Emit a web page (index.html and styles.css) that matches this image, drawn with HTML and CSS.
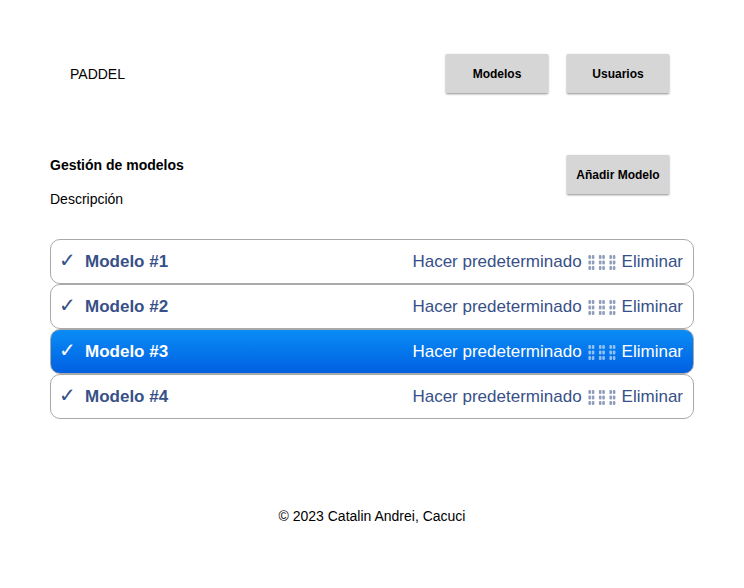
FILE: index.html
```html
<!DOCTYPE html>
<html lang="es">
<head>
<meta charset="utf-8">
<title>PADDEL</title>
<link rel="stylesheet" href="styles.css">
</head>
<body>
<header class="topbar">
  <div class="brand">PADDEL</div>
  <nav class="nav">
    <button class="btn">Modelos</button>
    <button class="btn">Usuarios</button>
  </nav>
</header>
<main class="content">
  <section class="intro">
    <div class="intro-text">
      <h2 class="title">Gestión de modelos</h2>
      <p class="desc">Descripción</p>
    </div>
    <button class="btn">Añadir Modelo</button>
  </section>
  <ul class="list">
    <li class="item"><span class="name"><span class="check">✓</span>Modelo #1</span><span class="actions">Hacer predeterminado<svg class="tofu" viewBox="0 0 28 15"><g><rect x="0.4" y="0" width="2.6" height="4" rx="1"/><rect x="3.8" y="0" width="2.6" height="4" rx="1"/><rect x="0.4" y="5.5" width="2.6" height="4" rx="1"/><rect x="3.8" y="5.5" width="2.6" height="4" rx="1"/><rect x="0.4" y="11" width="2.6" height="4" rx="1"/><rect x="3.8" y="11" width="2.6" height="4" rx="1"/></g><g transform="translate(10.5 0)"><rect x="0.4" y="0" width="2.6" height="4" rx="1"/><rect x="3.8" y="0" width="2.6" height="4" rx="1"/><rect x="0.4" y="5.5" width="2.6" height="4" rx="1"/><rect x="3.8" y="5.5" width="2.6" height="4" rx="1"/><rect x="0.4" y="11" width="2.6" height="4" rx="1"/><rect x="3.8" y="11" width="2.6" height="4" rx="1"/></g><g transform="translate(21 0)"><rect x="0.4" y="0" width="2.6" height="4" rx="1"/><rect x="3.8" y="0" width="2.6" height="4" rx="1"/><rect x="0.4" y="5.5" width="2.6" height="4" rx="1"/><rect x="3.8" y="5.5" width="2.6" height="4" rx="1"/><rect x="0.4" y="11" width="2.6" height="4" rx="1"/><rect x="3.8" y="11" width="2.6" height="4" rx="1"/></g></svg>Eliminar</span></li>
    <li class="item"><span class="name"><span class="check">✓</span>Modelo #2</span><span class="actions">Hacer predeterminado<svg class="tofu" viewBox="0 0 28 15"><g><rect x="0.4" y="0" width="2.6" height="4" rx="1"/><rect x="3.8" y="0" width="2.6" height="4" rx="1"/><rect x="0.4" y="5.5" width="2.6" height="4" rx="1"/><rect x="3.8" y="5.5" width="2.6" height="4" rx="1"/><rect x="0.4" y="11" width="2.6" height="4" rx="1"/><rect x="3.8" y="11" width="2.6" height="4" rx="1"/></g><g transform="translate(10.5 0)"><rect x="0.4" y="0" width="2.6" height="4" rx="1"/><rect x="3.8" y="0" width="2.6" height="4" rx="1"/><rect x="0.4" y="5.5" width="2.6" height="4" rx="1"/><rect x="3.8" y="5.5" width="2.6" height="4" rx="1"/><rect x="0.4" y="11" width="2.6" height="4" rx="1"/><rect x="3.8" y="11" width="2.6" height="4" rx="1"/></g><g transform="translate(21 0)"><rect x="0.4" y="0" width="2.6" height="4" rx="1"/><rect x="3.8" y="0" width="2.6" height="4" rx="1"/><rect x="0.4" y="5.5" width="2.6" height="4" rx="1"/><rect x="3.8" y="5.5" width="2.6" height="4" rx="1"/><rect x="0.4" y="11" width="2.6" height="4" rx="1"/><rect x="3.8" y="11" width="2.6" height="4" rx="1"/></g></svg>Eliminar</span></li>
    <li class="item active"><span class="name"><span class="check">✓</span>Modelo #3</span><span class="actions">Hacer predeterminado<svg class="tofu" viewBox="0 0 28 15"><g><rect x="0.4" y="0" width="2.6" height="4" rx="1"/><rect x="3.8" y="0" width="2.6" height="4" rx="1"/><rect x="0.4" y="5.5" width="2.6" height="4" rx="1"/><rect x="3.8" y="5.5" width="2.6" height="4" rx="1"/><rect x="0.4" y="11" width="2.6" height="4" rx="1"/><rect x="3.8" y="11" width="2.6" height="4" rx="1"/></g><g transform="translate(10.5 0)"><rect x="0.4" y="0" width="2.6" height="4" rx="1"/><rect x="3.8" y="0" width="2.6" height="4" rx="1"/><rect x="0.4" y="5.5" width="2.6" height="4" rx="1"/><rect x="3.8" y="5.5" width="2.6" height="4" rx="1"/><rect x="0.4" y="11" width="2.6" height="4" rx="1"/><rect x="3.8" y="11" width="2.6" height="4" rx="1"/></g><g transform="translate(21 0)"><rect x="0.4" y="0" width="2.6" height="4" rx="1"/><rect x="3.8" y="0" width="2.6" height="4" rx="1"/><rect x="0.4" y="5.5" width="2.6" height="4" rx="1"/><rect x="3.8" y="5.5" width="2.6" height="4" rx="1"/><rect x="0.4" y="11" width="2.6" height="4" rx="1"/><rect x="3.8" y="11" width="2.6" height="4" rx="1"/></g></svg>Eliminar</span></li>
    <li class="item"><span class="name"><span class="check">✓</span>Modelo #4</span><span class="actions">Hacer predeterminado<svg class="tofu" viewBox="0 0 28 15"><g><rect x="0.4" y="0" width="2.6" height="4" rx="1"/><rect x="3.8" y="0" width="2.6" height="4" rx="1"/><rect x="0.4" y="5.5" width="2.6" height="4" rx="1"/><rect x="3.8" y="5.5" width="2.6" height="4" rx="1"/><rect x="0.4" y="11" width="2.6" height="4" rx="1"/><rect x="3.8" y="11" width="2.6" height="4" rx="1"/></g><g transform="translate(10.5 0)"><rect x="0.4" y="0" width="2.6" height="4" rx="1"/><rect x="3.8" y="0" width="2.6" height="4" rx="1"/><rect x="0.4" y="5.5" width="2.6" height="4" rx="1"/><rect x="3.8" y="5.5" width="2.6" height="4" rx="1"/><rect x="0.4" y="11" width="2.6" height="4" rx="1"/><rect x="3.8" y="11" width="2.6" height="4" rx="1"/></g><g transform="translate(21 0)"><rect x="0.4" y="0" width="2.6" height="4" rx="1"/><rect x="3.8" y="0" width="2.6" height="4" rx="1"/><rect x="0.4" y="5.5" width="2.6" height="4" rx="1"/><rect x="3.8" y="5.5" width="2.6" height="4" rx="1"/><rect x="0.4" y="11" width="2.6" height="4" rx="1"/><rect x="3.8" y="11" width="2.6" height="4" rx="1"/></g></svg>Eliminar</span></li>
  </ul>
</main>
<footer class="footer">© 2023 Catalin Andrei, Cacuci</footer>
</body>
</html>
```
FILE: styles.css
```css
* { box-sizing: border-box; }
body {
  margin: 0;
  font-family: "Liberation Sans", Arial, sans-serif;
  color: #000;
  background: #fff;
}
.topbar {
  display: flex;
  align-items: center;
  justify-content: space-between;
  padding: 54px 75px 0 70px;
}
.brand { font-size: 14px; line-height: 20px; }
.nav { display: flex; gap: 19px; }
.btn {
  width: 102px;
  height: 39px;
  border: none;
  background: #d6d6d6;
  font-family: "Liberation Sans", Arial, sans-serif;
  font-weight: bold;
  font-size: 12px;
  color: #000;
  box-shadow: 0 1px 2px rgba(0,0,0,0.45);
  padding: 0;
}
.content { padding: 0 50px; }
.intro {
  display: flex;
  justify-content: space-between;
  align-items: flex-start;
  margin-top: 62px;
  padding-right: 25px;
}
.title { margin: 0; font-size: 14px; line-height: 20px; font-weight: bold; }
.desc { margin: 14px 0 0; font-size: 14px; line-height: 20px; }
.list { list-style: none; margin: 30px 0 0; padding: 0; }
.item {
  display: flex;
  align-items: center;
  justify-content: space-between;
  height: 45px;
  border: 1px solid #a9a9a9;
  border-radius: 10px;
  padding: 0 10px 0 8px;
  color: #375087;
  font-size: 17px;
  background: #fff;
}
.item.active {
  background: linear-gradient(#0a8cf6, #0060e0);
  color: #fff;
}
.name { font-weight: bold; display: flex; align-items: center; }
.check {
  font-family: "DejaVu Sans", sans-serif;
  font-weight: normal;
  font-size: 20px;
  line-height: 20px;
  width: 26px;
  margin-bottom: 4px;
}
.actions { display: flex; align-items: center; }
.tofu {
  width: 28px;
  height: 15px;
  margin: 2px 6px 0 6px;
  fill: currentColor;
  opacity: 0.55;
}
.footer {
  text-align: center;
  font-size: 14px;
  line-height: 20px;
  margin-top: 87px;
}
```
